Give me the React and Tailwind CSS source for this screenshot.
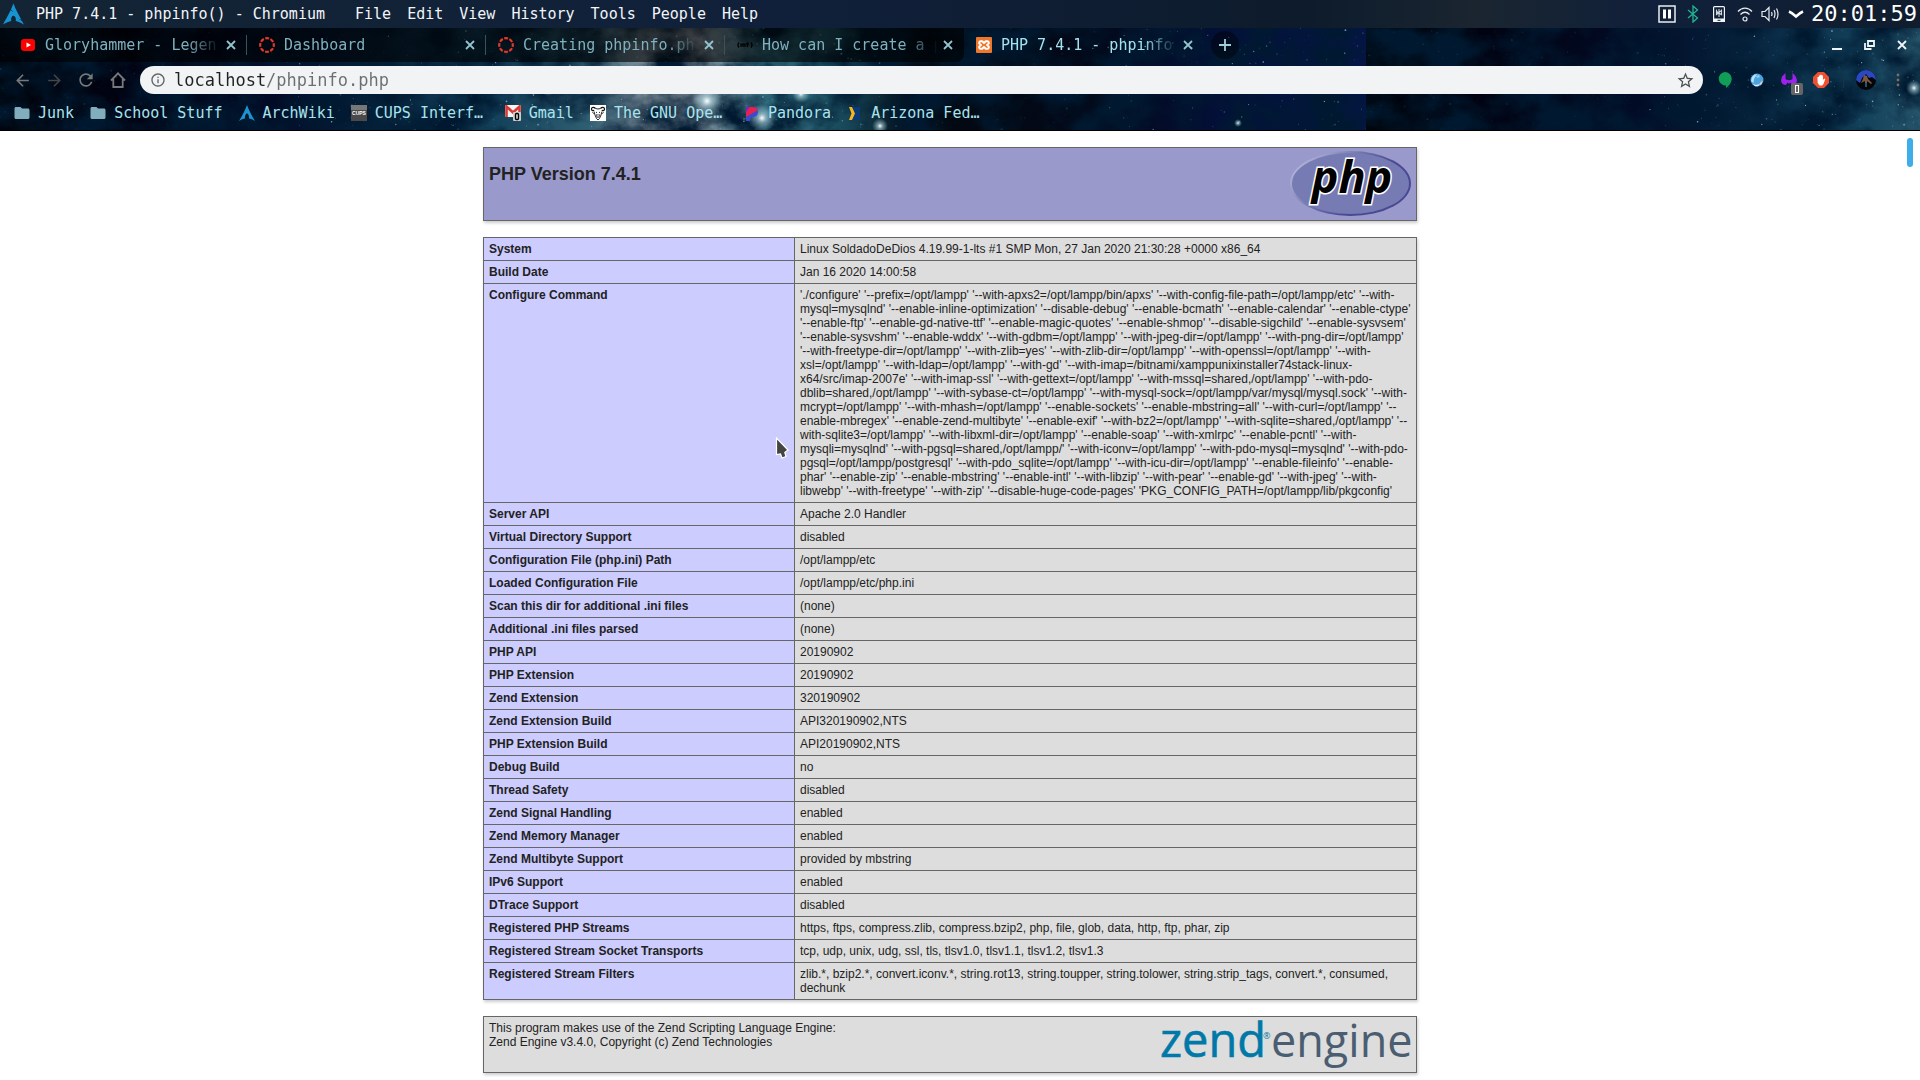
import React from "react";
import { MdArrowBack, MdArrowForward, MdRefresh, MdInfoOutline, MdStarBorder, MdFolder } from "react-icons/md";
import { SiArchlinux } from "react-icons/si";

const MENUS = ["File", "Edit", "View", "History", "Tools", "People", "Help"];

const CONFIGURE =
  "'./configure' '--prefix=/opt/lampp' '--with-apxs2=/opt/lampp/bin/apxs' '--with-config-file-path=/opt/lampp/etc' '--with-mysql=mysqlnd' '--enable-inline-optimization' '--disable-debug' '--enable-bcmath' '--enable-calendar' '--enable-ctype' '--enable-ftp' '--enable-gd-native-ttf' '--enable-magic-quotes' '--enable-shmop' '--disable-sigchild' '--enable-sysvsem' '--enable-sysvshm' '--enable-wddx' '--with-gdbm=/opt/lampp' '--with-jpeg-dir=/opt/lampp' '--with-png-dir=/opt/lampp' '--with-freetype-dir=/opt/lampp' '--with-zlib=yes' '--with-zlib-dir=/opt/lampp' '--with-openssl=/opt/lampp' '--with-xsl=/opt/lampp' '--with-ldap=/opt/lampp' '--with-gd' '--with-imap=/bitnami/xamppunixinstaller74stack-linux-x64/src/imap-2007e' '--with-imap-ssl' '--with-gettext=/opt/lampp' '--with-mssql=shared,/opt/lampp' '--with-pdo-dblib=shared,/opt/lampp' '--with-sybase-ct=/opt/lampp' '--with-mysql-sock=/opt/lampp/var/mysql/mysql.sock' '--with-mcrypt=/opt/lampp' '--with-mhash=/opt/lampp' '--enable-sockets' '--enable-mbstring=all' '--with-curl=/opt/lampp' '--enable-mbregex' '--enable-zend-multibyte' '--enable-exif' '--with-bz2=/opt/lampp' '--with-sqlite=shared,/opt/lampp' '--with-sqlite3=/opt/lampp' '--with-libxml-dir=/opt/lampp' '--enable-soap' '--with-xmlrpc' '--enable-pcntl' '--with-mysqli=mysqlnd' '--with-pgsql=shared,/opt/lampp/' '--with-iconv=/opt/lampp' '--with-pdo-mysql=mysqlnd' '--with-pdo-pgsql=/opt/lampp/postgresql' '--with-pdo_sqlite=/opt/lampp' '--with-icu-dir=/opt/lampp' '--enable-fileinfo' '--enable-phar' '--enable-zip' '--enable-mbstring' '--enable-intl' '--with-libzip' '--with-pear' '--enable-gd' '--with-jpeg' '--with-libwebp' '--with-freetype' '--with-zip' '--disable-huge-code-pages' 'PKG_CONFIG_PATH=/opt/lampp/lib/pkgconfig'";

const ROWS = [
  ["System", "Linux SoldadoDeDios 4.19.99-1-lts #1 SMP Mon, 27 Jan 2020 21:30:28 +0000 x86_64"],
  ["Build Date", "Jan 16 2020 14:00:58"],
  ["Configure Command", CONFIGURE],
  ["Server API", "Apache 2.0 Handler"],
  ["Virtual Directory Support", "disabled"],
  ["Configuration File (php.ini) Path", "/opt/lampp/etc"],
  ["Loaded Configuration File", "/opt/lampp/etc/php.ini"],
  ["Scan this dir for additional .ini files", "(none)"],
  ["Additional .ini files parsed", "(none)"],
  ["PHP API", "20190902"],
  ["PHP Extension", "20190902"],
  ["Zend Extension", "320190902"],
  ["Zend Extension Build", "API320190902,NTS"],
  ["PHP Extension Build", "API20190902,NTS"],
  ["Debug Build", "no"],
  ["Thread Safety", "disabled"],
  ["Zend Signal Handling", "enabled"],
  ["Zend Memory Manager", "enabled"],
  ["Zend Multibyte Support", "provided by mbstring"],
  ["IPv6 Support", "enabled"],
  ["DTrace Support", "disabled"],
  ["Registered PHP Streams", "https, ftps, compress.zlib, compress.bzip2, php, file, glob, data, http, ftp, phar, zip"],
  ["Registered Stream Socket Transports", "tcp, udp, unix, udg, ssl, tls, tlsv1.0, tlsv1.1, tlsv1.2, tlsv1.3"],
  ["Registered Stream Filters", "zlib.*, bzip2.*, convert.iconv.*, string.rot13, string.toupper, string.tolower, string.strip_tags, convert.*, consumed, dechunk"],
];

/* Deterministic star positions over one 1366px wallpaper tile. */
const STARS = (() => {
  let seed = 41;
  const rnd = () => {
    seed = (seed * 16807) % 2147483647;
    return seed / 2147483647;
  };
  return Array.from({ length: 900 }, () => {
    const x = rnd() * 1366;
    const lit = (x > 280 && x < 900) || x > 1090;
    return {
      x,
      y: rnd() * 104,
      r: 0.3 + rnd() * rnd() * 0.8,
      o: (lit ? 0.75 : 0.15) * rnd(),
    };
  });
})();

function Starfield() {
  return (
    <svg className="absolute inset-0 h-full w-full" aria-hidden="true">
      <defs>
        <linearGradient id="sky">
          <stop offset="0" stopColor="#000208" />
          <stop offset=".1" stopColor="#010313" />
          <stop offset=".2" stopColor="#020b26" />
          <stop offset=".27" stopColor="#06213c" />
          <stop offset=".36" stopColor="#12405a" />
          <stop offset=".43" stopColor="#2f5e72" />
          <stop offset=".47" stopColor="#7c8f9b" />
          <stop offset=".51" stopColor="#98a3ad" />
          <stop offset=".56" stopColor="#3c7f90" />
          <stop offset=".62" stopColor="#174759" />
          <stop offset=".67" stopColor="#030911" />
          <stop offset=".8" stopColor="#020818" />
          <stop offset=".9" stopColor="#03103a" />
          <stop offset="1" stopColor="#051448" />
        </linearGradient>
        <radialGradient id="glow">
          <stop offset="0" stopColor="#fff" />
          <stop offset=".3" stopColor="#c3e5ee" stopOpacity=".6" />
          <stop offset="1" stopColor="#8fc4d0" stopOpacity="0" />
        </radialGradient>
        <filter id="clouds" x="0" y="0" width="100%" height="100%">
          <feTurbulence type="fractalNoise" baseFrequency=".02 .026" numOctaves="6" seed="8" />
          <feColorMatrix values="0 0 0 0 0  0 0 0 0 0.01  0 0 0 0 0.03  2.6 0 0 0 -0.8" />
        </filter>
        <pattern id="wallpaper" width="1366" height="140" patternUnits="userSpaceOnUse">
          <rect width="1366" height="140" fill="url(#sky)" />
          <rect width="1366" height="140" filter="url(#clouds)" />
          {STARS.map((s, i) => (
            <circle key={i} cx={s.x} cy={s.y} r={s.r} fill="#a9d8ea" opacity={s.o} />
          ))}
          <circle cx="707" cy="73" r="16" fill="url(#glow)" />
          <circle cx="762" cy="90" r="14" fill="url(#glow)" />
          <circle cx="801" cy="66" r="9" fill="url(#glow)" />
          <circle cx="880" cy="98" r="8" fill="url(#glow)" />
          <circle cx="1238" cy="95" r="4" fill="url(#glow)" />
          <circle cx="548" cy="60" r="8" fill="url(#glow)" />
        </pattern>
      </defs>
      <rect width="100%" height="100%" fill="url(#wallpaper)" />
    </svg>
  );
}

const Cross = ({ className }) => (
  <svg viewBox="0 0 10 10" className={className} stroke="currentColor" strokeWidth="1.8" aria-hidden="true">
    <path d="M1 1l8 8M9 1L1 9" />
  </svg>
);

const YouTube = () => (
  <svg viewBox="0 0 16 16" className="size-4 shrink-0">
    <rect x="1" y="2" width="14" height="12" rx="3" fill="#f00" />
    <path d="M6.5 5.4v5.2L11 8z" fill="#fff" />
  </svg>
);
const CanvasRing = () => (
  <svg viewBox="0 0 16 16" className="size-4 shrink-0">
    <circle cx="8" cy="8" r="6.8" fill="none" stroke="#e4392b" strokeWidth="2.2" strokeDasharray="3.9 1.44" strokeDashoffset="2" />
  </svg>
);
const Xampp = () => (
  <svg viewBox="0 0 16 16" className="size-4 shrink-0">
    <rect width="16" height="16" rx="1" fill="#f0762a" />
    <path d="M5 4.2h1.2L8 6l1.8-1.8H11a1.6 1.6 0 0 1 1 3L11 8l1 .8a1.6 1.6 0 0 1-1 3H9.8L8 10l-1.8 1.8H5a1.6 1.6 0 0 1-1-3L5 8l-1-.8a1.6 1.6 0 0 1 1-3z" fill="none" stroke="#fff" strokeWidth="2" strokeLinejoin="round" />
  </svg>
);
const RootMark = () => (
  <svg viewBox="0 0 16 16" className="size-4 shrink-0" fill="none" stroke="#000" strokeWidth="1.3">
    <path d="M2 5.5C.8 7 .8 9 2 10.5M14 5.5c1.2 1.5 1.2 3.5 0 5M4 10V7.2h2V10M6 7.2h2V10M10.5 5.5V10M9.3 7h2.5" />
  </svg>
);

const TABS = [
  { title: "Gloryhammer - Legen", icon: YouTube },
  { title: "Dashboard", icon: CanvasRing },
  { title: "Creating phpinfo.ph", icon: CanvasRing },
  { title: "How can I create a p", icon: RootMark },
  { title: "PHP 7.4.1 - phpinfo", icon: Xampp, active: true },
];

function Tab({ title, icon: Icon, active }) {
  return (
    <div className={active ? "flex w-[239px] items-center pl-3 pr-[10px] text-[#a3e2ef]" : "flex w-[239px] items-center border-r border-[#3f5158] pl-3 pr-[10px] text-[#7fb0bd] last:border-transparent"}>
      <button className="flex min-w-0 flex-1 items-center gap-[9px] text-left">
        <Icon />
        <span className="w-[181px] shrink-0 whitespace-nowrap [mask-image:linear-gradient(to_right,black_142px,transparent_176px)]">{title}</span>
      </button>
      <button aria-label={"Close " + title} className="ml-[5px] text-[#93c4cf]">
        <Cross className="size-[10px]" />
      </button>
    </div>
  );
}

const Folder = () => <MdFolder className="size-[18px] -mx-px shrink-0 text-[#82adbd]" />;
const Arch = () => (
  <svg viewBox="0 0 16 16" className="size-4 shrink-0">
    <path d="M8 0C6.5 4 3.5 10.5 0 16c2.400-1.400 4.300-2.200 6-2.500-.3-3 .9-5 2-5s2.300 2 2 5c1.700.3 3.600 1.100 6 2.500C12.500 10.500 9.500 4 8 0z" fill="#1b94d2" />
  </svg>
);
const Cups = () => (
  <svg viewBox="0 0 16 16" className="size-4 shrink-0">
    <rect width="16" height="16" fill="#4a4a4a" />
    <rect width="16" height="5" fill="#777" />
    <text x="8" y="10" fontSize="5" fontWeight="700" textAnchor="middle" fill="#fff" fontFamily="Liberation Sans, sans-serif">CUPS</text>
  </svg>
);
const Gmail = () => (
  <svg viewBox="0 0 16 16" className="size-4 shrink-0">
    <rect width="16" height="12" rx="1" fill="#f4f4f4" />
    <path d="M1.5 12V1.5L8 7.5l6.500-6V12" fill="none" stroke="#d93a34" strokeWidth="2.6" />
    <rect x="8" y="7" width="8" height="9" rx="1" fill="#ccc" />
    <rect x="10.5" y="8.5" width="3" height="6" rx="1" fill="none" stroke="#000" strokeWidth="1.3" />
  </svg>
);
const Gnu = () => (
  <svg viewBox="0 0 16 16" className="size-4 shrink-0">
    <rect width="16" height="16" fill="#fff" />
    <g fill="none" stroke="#111">
      <path d="M5.500 3.500C4 2 1.500 2 1.500 4S3.500 6 4 5M10.500 3.500C12 2 14.500 2 14.500 4S12.500 6 12 5" strokeWidth="1.300" />
      <path d="M5.500 3.500q2.500 1 5 0M4 6.500l1 3.500 1.500 3.500L8 15l1.500-1.500L11 10l1-3.500M6 7l1 .8M10 7l-1 .8M7 9l-.3 2.500 1.300 1 1.300-1L9 9" strokeWidth=".9" />
      <path d="M2.500 7.500l1.300 1M13.500 7.500l-1.300 1" />
    </g>
  </svg>
);
const Pandora = () => (
  <svg viewBox="0 0 16 16" className="size-4 shrink-0">
    <path d="M2 2h6c4 0 6 2 6 5s-2 5-6 5H7l-1 4H2z" fill="#3a4bd0" />
    <path d="M2 2h6c3 0 5 1 6 3L2 12z" fill="#e8204e" />
    <path d="M2 2h4L2 7z" fill="#7a26c0" />
  </svg>
);
const Arizona = () => (
  <svg viewBox="0 0 16 16" className="size-4 shrink-0">
    <path d="M5 2h8v13H5l3-6.500z" fill="#0a3a78" />
    <path d="M2 2h3l3 6.500L5 15H2l2.500-6.500z" fill="#f7b521" />
  </svg>
);

const BOOKMARKS = [
  { title: "Junk", icon: Folder },
  { title: "School Stuff", icon: Folder },
  { title: "ArchWiki", icon: Arch },
  { title: "CUPS Interf…", icon: Cups, cut: true },
  { title: "Gmail", icon: Gmail },
  { title: "The GNU Ope…", icon: Gnu, cut: true },
  { title: "Pandora", icon: Pandora },
  { title: "Arizona Fed…", icon: Arizona, cut: true },
];

function MenuBar() {
  return (
    <header className="flex h-7 items-center bg-[#10202f] bg-[linear-gradient(to_right,#132434,#10203a_40%,#0d1b2c_68%,#1a2530_77%,#10203a_86%,#0f1d2e)] pl-[3px] text-[15px] text-[#f2f5f7]">
      <SiArchlinux className="size-[22px] shrink-0 text-[#1793d1]" />
      <span className="ml-[11px] w-[303px] whitespace-nowrap">PHP 7.4.1 - phpinfo() - Chromium</span>
      <nav className="ml-4 flex gap-4">
        {MENUS.map((m) => (
          <button key={m}>{m}</button>
        ))}
      </nav>
      <div className="ml-auto flex items-center">
        <svg viewBox="0 0 18 18" className="size-[18px]" aria-hidden="true">
          <rect x="1" y="1" width="16" height="16" fill="none" stroke="#e8edf0" strokeWidth="1.5" />
          <path d="M5 4.5h3v9H5zM10 4.5h3v9h-3z" fill="#fff" />
        </svg>
        <svg viewBox="0 0 12 18" className="ml-[11px] h-[18px] w-3" fill="none" stroke="#1fb592" strokeWidth="1.3" aria-hidden="true">
          <path d="M1 5l9.500 8L6 17V1l4.500 4L1 13" />
        </svg>
        <svg viewBox="0 0 12 16" className="ml-[14px] h-4 w-3" aria-hidden="true">
          <rect x=".6" y=".6" width="10.8" height="14.8" rx="1" fill="none" stroke="#f2f5f7" strokeWidth="1.2" />
          <path d="M0 12.5h12V16H0z" fill="#f2f5f7" />
          <path d="M4.500 14.300h3" stroke="#10203a" />
          <path d="M3 5l6 4M6 3v8M9 4L3 9M3.500 3.500v5M8.500 3.500v6" stroke="#cfd6dc" strokeWidth="1.1" />
        </svg>
        <svg viewBox="0 0 16 16" className="ml-3 size-4" fill="none" stroke="#e8edf0" strokeWidth="1.2" aria-hidden="true">
          <path d="M1 5.500c4-4.500 10-4.500 14 0M3.500 8.500c3-3 6-3 9 0" />
          <circle cx="8" cy="13" r="2" />
        </svg>
        <svg viewBox="0 0 18 16" className="ml-2 h-4 w-[18px]" fill="none" stroke="#e8edf0" strokeWidth="1.2" aria-hidden="true">
          <path d="M1 5.500h3l4-4v13l-4-4H1zM10.500 6q1 2 0 4M13 4q2 4 0 8M15.500 2.500q3 5.500 0 11" />
        </svg>
        <svg viewBox="0 0 16 9" className="ml-[9px] h-[9px] w-4" fill="none" stroke="#fff" strokeWidth="2.5" aria-hidden="true">
          <path d="M1 1.500q3.500 1.500 7 5 3.500-3.500 7-5" />
        </svg>
        <time className="ml-[7px] pr-[3px] text-[22px] leading-7 text-white">20:01:59</time>
      </div>
    </header>
  );
}

function BrowserChrome() {
  return (
    <div className="relative border-b border-black bg-[#02060e]">
      <Starfield />
      <div className="relative flex h-[34px] items-stretch">
        <div className="flex rounded-br-lg bg-black/60 py-[7px] pl-2 text-[15px] leading-5">
          {TABS.slice(0, 4).map((t) => (
            <Tab key={t.title} {...t} />
          ))}
        </div>
        <div className="flex py-[7px] text-[15px] leading-5">
          <Tab {...TABS[4]} />
        </div>
        <button aria-label="New tab" className="ml-2 flex size-7 items-center justify-center self-center rounded-full bg-black/40 text-[#9fd0da]">
          <svg viewBox="0 0 12 12" className="size-3" stroke="currentColor" strokeWidth="1.8">
            <path d="M6 0v12M0 6h12" />
          </svg>
        </button>
        <div className="ml-auto flex items-center gap-[22px] pr-[13px] text-[#f2f5f7]">
          <button aria-label="Minimize">
            <svg viewBox="0 0 10 10" className="size-[10px]" fill="currentColor"><path d="M0 8h10v2H0z" /></svg>
          </button>
          <button aria-label="Restore">
            <svg viewBox="0 0 11 10" className="h-[10px] w-[11px]" fill="none" stroke="currentColor" strokeWidth="1.8">
              <path d="M4 1h6v5H4zM1 3v6h6.500" />
            </svg>
          </button>
          <button aria-label="Close">
            <Cross className="size-[10px]" />
          </button>
        </div>
      </div>

      <div className="relative flex h-9 items-center pl-[13px] pr-5 text-[#77787a]">
        <button aria-label="Back"><MdArrowBack className="size-[19px]" /></button>
        <button aria-label="Forward" className="ml-[13px] text-[#444547]"><MdArrowForward className="size-[19px]" /></button>
        <button aria-label="Reload" className="ml-[12px]"><MdRefresh className="size-5" /></button>
        <button aria-label="Home" className="ml-[14px]">
          <svg viewBox="0 0 16 16" className="size-4" fill="none" stroke="currentColor" strokeWidth="1.8">
            <path d="M1 8.500L8 1.300l7 7.200M3.300 7v8h9.400V7" />
          </svg>
        </button>
        <div className="ml-[14px] flex h-7 flex-1 items-center rounded-full bg-[#f1f3f4] pl-[10px] pr-2 text-[#5f6368]">
          <MdInfoOutline className="size-4 shrink-0" />
          <input
            aria-label="Address"
            defaultValue="localhost/phpinfo.php"
            className="ml-2 min-w-0 flex-1 bg-[linear-gradient(to_right,#202124_92px,#6b6f73_92px)] bg-clip-text text-[17px] leading-6 text-transparent outline-none"
          />
          <button aria-label="Bookmark this page"><MdStarBorder className="size-[19px] text-[#4c4f52]" /></button>
        </div>
        <div className="ml-[15px] flex items-center">
          <svg viewBox="0 0 14 16" className="h-4 w-[14px]" aria-hidden="true">
            <path d="M7 0a6.700 6.700 0 0 1 6.700 6.700c0 4-3 7.300-5.700 9.300v-2.600A6.700 6.700 0 1 1 7 0z" fill="#0f9d58" />
          </svg>
          <svg viewBox="0 0 14 14" className="ml-[18px] size-[14px]" aria-hidden="true">
            <circle cx="7" cy="7" r="6.5" fill="#4aa3df" />
            <path d="M2 4q2-3 5-3L4 6 3.500 10 1 8z" fill="#b9dff5" />
            <path d="M3 11l3 1 4-1-2 2.300H5z" fill="#e3eef5" />
            <path d="M9.500 10.500l3-3-.5 3-2 2z" fill="#e8c8c0" />
            <path d="M6 3l3-1 1 2-3 1z" fill="#8fcbef" />
          </svg>
          <div className="relative ml-[17px] h-4 w-5">
            <svg viewBox="0 0 16 14" className="h-[14px] w-4" aria-hidden="true">
              <path d="M4.500 1v6q3.500 2.500 7 0V1q4 3 4.500 8-1 4-5 4-1-3-3-3t-3 3q-4 0-5-4Q.5 4 4.500 1z" fill="#a020f0" />
              <circle cx="8" cy="10" r="1.5" fill="#a020f0" />
            </svg>
            <span className="absolute left-[10px] top-[11px] flex h-3 w-3 items-center justify-center rounded-xs bg-[#666]">
              <span className="h-2 w-1 border border-white" />
            </span>
          </div>
          <svg viewBox="0 0 16 16" className="ml-3 size-4" aria-hidden="true">
            <path d="M5 0h6l5 5v6l-5 5H5l-5-5V5z" fill="#f0502f" />
            <path d="M4.500 7V5h1.300v2.500V3.500h1.400V7 2.800h1.500V7 3.500H10V8l1.200-1.500 1 .7L10.500 12l-1.500 1.500H6.500L4.700 11z" fill="#fff" />
          </svg>
          <span className="ml-[14px] h-4 w-px bg-[#1d3340]" />
          <svg viewBox="0 0 20 20" className="ml-3 size-5" aria-hidden="true">
            <circle cx="10" cy="10" r="10" fill="#05060a" />
            <path d="M0 10a10 10 0 0 1 20 0l-4-3-3 1-3-4-4 4-2 5z" fill="#2b48c4" />
            <path d="M8 5l3 1 1 3 4 4-1 1-4-3v4l-2 2v-6l-4 2 2-4z" fill="#7a5840" />
            <path d="M9 13h2v4H9z" fill="#1d5470" />
          </svg>
          <button aria-label="Browser menu" className="ml-5">
            <svg viewBox="0 0 4 14" className="h-[14px] w-1" fill="#75706c">
              <circle cx="2" cy="2" r="1.4" /><circle cx="2" cy="7" r="1.4" /><circle cx="2" cy="12" r="1.4" />
            </svg>
          </button>
        </div>
      </div>

      <nav className="relative flex h-8 items-center gap-[15px] pl-[14px] pb-[3px] text-[15px] leading-5 text-[#a9e3ee]">
        {BOOKMARKS.map(({ title, icon: Icon, cut }) => (
          <a key={title} href="#" className="flex items-center gap-2 whitespace-nowrap">
            <Icon />
            <span className={cut ? "w-[115px]" : "pr-px"}>{title}</span>
          </a>
        ))}
      </nav>
    </div>
  );
}

const PhpLogo = () => (
  <svg viewBox="0 0 121 65" className="h-[65px] w-[121px] shrink-0" role="img" aria-label="PHP logo">
    <defs>
      <linearGradient id="rim" x1="0" y1="0" x2="1" y2=".5">
        <stop offset=".15" stopColor="#aeb2d5" />
        <stop offset=".5" stopColor="#6e72ab" />
        <stop offset=".75" stopColor="#484893" />
      </linearGradient>
    </defs>
    <ellipse cx="60.5" cy="32.5" rx="60.5" ry="32.500" fill="url(#rim)" />
    <ellipse cx="60.5" cy="32.5" rx="58.500" ry="30.500" fill="#777bb3" />
    <text x="62" y="42" textAnchor="middle" fontSize="45" fontWeight="700" fontStyle="italic" fontFamily="Open Sans, Noto Sans, sans-serif" fill="#000" stroke="#fff" strokeWidth="3" paintOrder="stroke">php</text>
  </svg>
);

const ZendLogo = () => (
  <svg viewBox="0 0 251 47" className="h-[47px] w-[251px] shrink-0 overflow-visible" fontFamily="Open Sans, Noto Sans, sans-serif" role="img" aria-label="Zend Engine logo">
    <text x="0" y="36" fontSize="47" fill="#0078a8" stroke="#0078a8" strokeWidth=".6">zend</text>
    <text x="103" y="18" fontSize="9" fill="#0078a8">®</text>
    <text x="111" y="36" fontSize="45" fill="#4b5d71">engine</text>
  </svg>
);

export default function App() {
  return (
    <div className="flex min-h-screen flex-col bg-white font-['DejaVu_Sans_Mono',monospace]">
      <MenuBar />
      <BrowserChrome />
      <div className="relative flex flex-1 justify-between font-['Liberation_Sans',Arial,sans-serif] text-xs leading-[14px] text-[#222]">
        <main className="mx-auto flex w-full max-w-[934px] flex-col gap-4 pt-4">
          <header className="flex items-start justify-between border border-[#666] bg-[#9999cc] px-[5px] pt-[3px] pb-1 shadow-[1px_2px_3px_#ccc]">
            <h1 className="mt-[13px] text-lg leading-5 font-bold">PHP Version 7.4.1</h1>
            <PhpLogo />
          </header>

          <table className="w-full table-fixed border-collapse shadow-[1px_2px_3px_#ccc]">
            <tbody>
              {ROWS.map(([label, value]) => (
                <tr key={label}>
                  <th scope="row" className="w-1/3 border border-[#666] bg-[#ccccff] px-[5px] py-1 text-left align-top font-bold">{label}</th>
                  <td className="border border-[#666] bg-[#dddddd] px-[5px] py-1 align-top break-words">{value}</td>
                </tr>
              ))}
            </tbody>
          </table>

          <section className="flex items-start justify-between border border-[#666] bg-[#dddddd] px-[5px] py-1 shadow-[1px_2px_3px_#ccc]">
            <p>
              This program makes use of the Zend Scripting Language Engine:
              <br />
              Zend Engine v3.4.0, Copyright (c) Zend Technologies
            </p>
            <ZendLogo />
          </section>
        </main>
        <div className="w-5 pl-[7px] pt-[7px]">
          <div className="h-[29px] w-[6px] rounded-full bg-[#3daee9]" />
        </div>
        <svg viewBox="0 0 14 22" className="pointer-events-none absolute left-[775px] top-[306px] h-[22px] w-[14px]" aria-hidden="true">
          <path d="M1.500 1v16.500l4-.5 1.500 4 4-1.500-1.200-4 3.200-2.500z" fill="#444" stroke="#fff" strokeWidth="1.2" />
        </svg>
      </div>
    </div>
  );
}
